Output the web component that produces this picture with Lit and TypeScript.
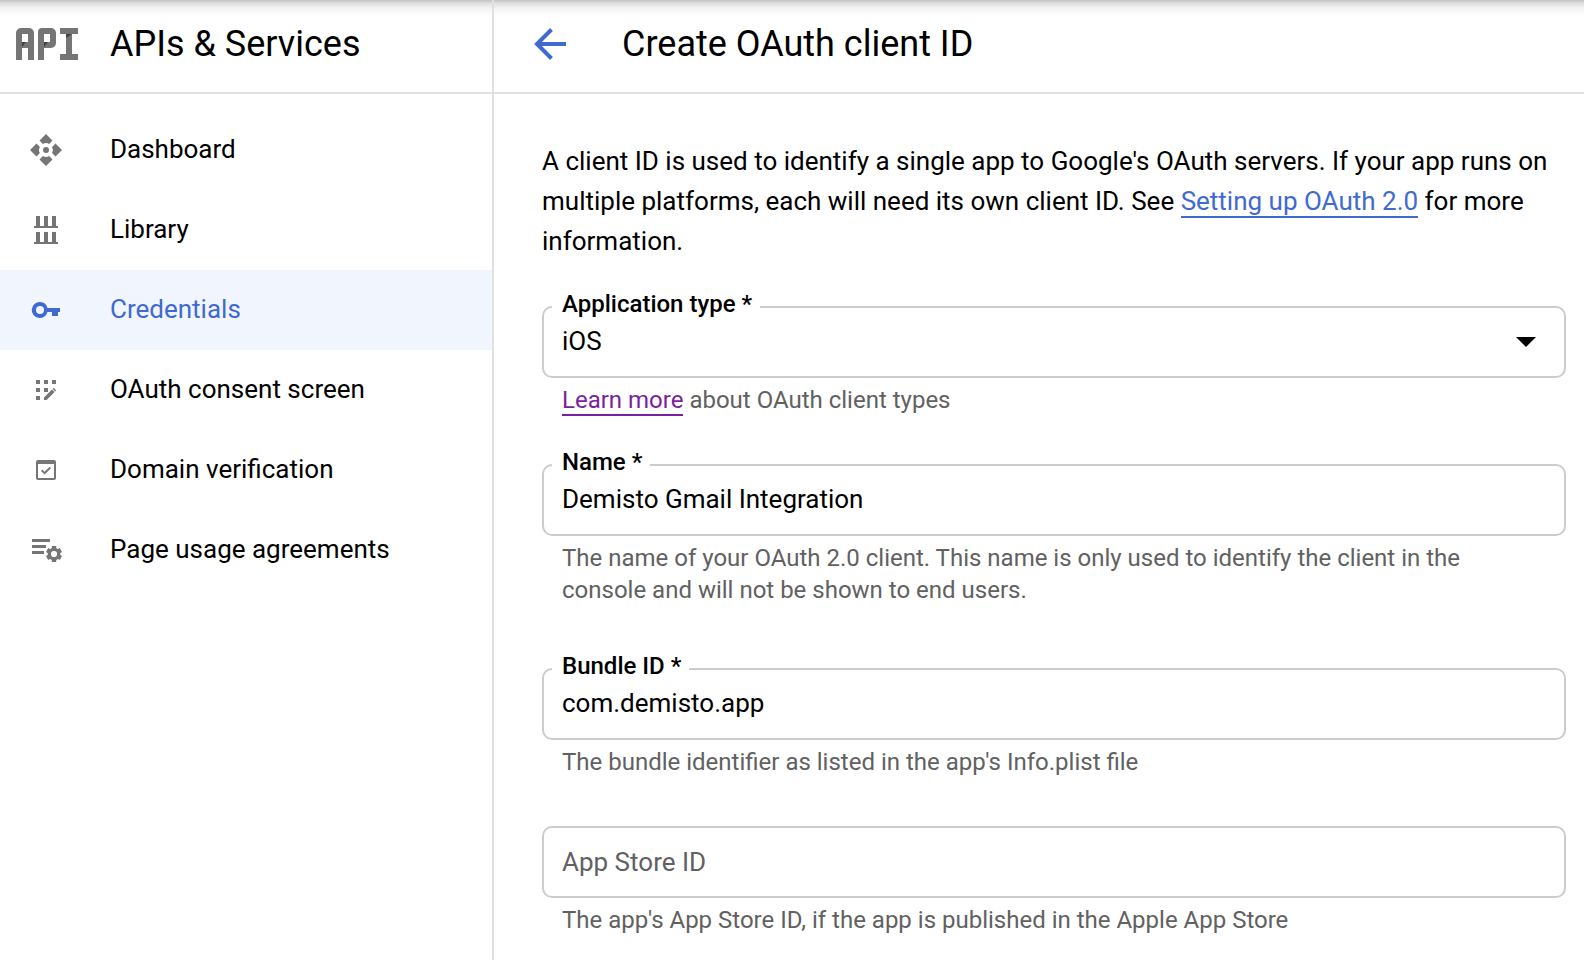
import { LitElement, html, css, svg, nothing, type TemplateResult } from "lit";
import { customElement, property } from "lit/decorators.js";

interface NavItem {
  label: string;
  icon: TemplateResult;
  active?: boolean;
}

const NAV: NavItem[] = [
  {
    label: "Dashboard",
    icon: svg`<path d="M16 0l6.500 6.500-3.400 3.400A6 6 0 0 0 12.900 9.900L9.500 6.500zM32 16l-6.500 6.500-3.400-3.400A6 6 0 0 0 22.100 12.900L25.500 9.500zM16 32l-6.500-6.500 3.400-3.400A6 6 0 0 0 19.100 22.100L22.500 25.500zM0 16l6.500-6.500 3.400 3.400A6 6 0 0 0 9.900 19.100L6.500 22.500z"/><circle cx="16" cy="16" r="3"/>`,
  },
  {
    label: "Library",
    icon: svg`<path d="M6 2h4v10h4V2h4v10h4V2h4v10h2v2H4v-2h2zM6 18h4v10h4V18h4v10h4V18h4v10h2v2H4v-2h2z"/>`,
  },
  {
    label: "Credentials",
    active: true,
    icon: svg`<path fill-rule="evenodd" d="M10 8a8 8 0 0 1 7.500 6H30v4h-2v4h-6v-4h-4.500A8 8 0 1 1 10 8zm0 4a4 4 0 1 0 0 8 4 4 0 0 0 0-8z"/>`,
  },
  {
    label: "OAuth consent screen",
    icon: svg`<path d="M6 6h4v4H6zM14 6h4v4h-4zM22 6h4v4h-4zM6 14h4v4H6zM14 14h4v4h-4zM6 22h4v4H6zM14 23.400V26h2.600l8-8-2.600-2.600zM26.200 16.400l-1 1-2.600-2.600 1-1z"/>`,
  },
  {
    label: "Domain verification",
    icon: svg`<path fill-rule="evenodd" d="M8 6h16a2 2 0 0 1 2 2v16a2 2 0 0 1-2 2H8a2 2 0 0 1-2-2V8a2 2 0 0 1 2-2zm0 4v14h16V10zm6.600 10.600l-3.600-3.600 1.400-1.400 2.200 2.200 5-5 1.400 1.400z"/>`,
  },
  {
    label: "Page usage agreements",
    icon: svg`<path d="M2 5h18v3H2zM2 11h14v3H2zM2 17h12v3H2z"/><g fill="none" stroke="#757575"><circle cx="24" cy="20" r="4.700" stroke-width="3.200"/><path stroke-width="4.400" d="M24 15v-3M24 25v3M28.300 17.500l2.600-1.500M28.300 22.500l2.600 1.500M19.700 17.500l-2.600-1.500M19.700 22.500l-2.600 1.500"/></g>`,
  },
];

@customElement("form-field")
class FormField extends LitElement {
  @property() label = "";
  @property() value = "";
  @property({ type: Boolean }) required = false;
  @property({ type: Boolean }) select = false;

  static styles = css`
    :host {
      display: block;
    }
    .box {
      position: relative;
      display: grid;
      align-items: center;
    }
    .control {
      grid-area: 1 / 1;
      box-sizing: border-box;
      width: 100%;
      height: 72px;
      margin: 0;
      padding: 0 18px;
      border: 2px solid #ccc;
      border-radius: 10px;
      outline: none;
      background: transparent;
      color: #000;
      font: inherit;
      font-size: 26px;
      appearance: none;
    }
    .control:focus-visible {
      border-color: #3367d6;
    }
    .filled {
      padding-bottom: 2px;
    }
    .control::placeholder {
      color: #616161;
      opacity: 1;
    }
    .label {
      position: absolute;
      top: -18px;
      left: 10px;
      padding: 0 8px 0 10px;
      background: #fff;
      font-size: 24px;
      font-weight: 500;
      line-height: 32px;
    }
    .arrow {
      grid-area: 1 / 1;
      justify-self: end;
      width: 20px;
      height: 10px;
      margin-right: 30px;
      pointer-events: none;
    }
    .hint {
      padding: 6px 20px 0;
      color: #616161;
      font-size: 24px;
      line-height: 32px;
    }
  `;

  render() {
    const name = this.required ? `${this.label} *` : this.label;
    return html`
      <div class="box">
        ${this.select
          ? html`<select id="control" class="control filled">
                <option>${this.value}</option>
              </select>
              <svg class="arrow" viewBox="0 0 20 10" aria-hidden="true">
                <path d="M0 0h20L10 10z" />
              </svg>`
          : html`<input
              id="control"
              class="control ${this.value ? "filled" : ""}"
              type="text"
              .value=${this.value}
              placeholder=${this.value ? nothing : name}
              aria-label=${this.value ? nothing : name}
            />`}
        ${this.value ? html`<label class="label" for="control">${name}</label>` : nothing}
      </div>
      <div class="hint"><slot></slot></div>
    `;
  }
}

@customElement("app-root")
class AppRoot extends LitElement {
  static styles = css`
    :host {
      display: block;
      font-family: Roboto, "Noto Sans", sans-serif;
      color: #000;
      background: #fff;
    }
    .layout {
      display: grid;
      grid-template-columns: 494px 1fr;
      min-height: 100vh;
      background: linear-gradient(#c2c2c2, #dedede 3px, #f2f2f2 8px, #fff 16px);
    }
    .side {
      border-right: 2px solid #e0e0e0;
    }
    .bar {
      display: flex;
      align-items: center;
      box-sizing: border-box;
      height: 94px;
      padding-bottom: 4px;
      border-bottom: 2px solid #e0e0e0;
    }
    .side .bar {
      gap: 32px;
      padding-left: 16px;
    }
    .main .bar {
      gap: 56px;
      padding-left: 40px;
    }
    .logo {
      width: 62px;
      height: 32px;
    }
    h1,
    h2 {
      margin: 0;
      font-size: 36px;
      font-weight: 400;
      line-height: 48px;
    }
    .back {
      display: flex;
      padding: 0;
      border: 0;
      background: none;
      cursor: pointer;
    }
    .nav {
      display: flex;
      flex-direction: column;
      padding-top: 16px;
    }
    .item {
      display: flex;
      align-items: center;
      gap: 48px;
      height: 80px;
      padding-left: 30px;
      color: #000;
      font-size: 26px;
      text-decoration: none;
    }
    .text {
      padding-bottom: 2px;
    }
    .item svg {
      width: 32px;
      height: 32px;
      fill: #757575;
    }
    .item.active {
      background: #f0f5fe;
      color: #3f6ad2;
    }
    .item.active svg {
      fill: #3f6ad2;
    }
    .content {
      padding: 47px 18px 0 48px;
    }
    .intro {
      margin: 0;
      font-size: 26px;
      line-height: 40px;
    }
    .form {
      display: flex;
      flex-direction: column;
      gap: 48px;
      padding-top: 45px;
    }
    .roomy {
      padding-bottom: 14px;
    }
    .link {
      border-bottom: 2px solid #3f6ad2;
      color: #3f6ad2;
      text-decoration: none;
    }
    .visited {
      border-color: #7b1fa2;
      color: #7b1fa2;
    }
  `;

  render() {
    return html`
      <div class="layout">
        <aside class="side">
          <div class="bar">
            <svg class="logo" viewBox="0 0 62 32" fill="#757575" aria-hidden="true">
              <path fill-rule="evenodd" d="M5 0h8a5 5 0 0 1 5 5v27h-6V20H6v12H0V5a5 5 0 0 1 5-5zM6 6v8h6V6z" />
              <path fill-rule="evenodd" d="M26 0h9a5 5 0 0 1 5 5v10a5 5 0 0 1-5 5h-7v12h-6V4a4 4 0 0 1 4-4zM28 6v8h6V6z" />
              <path d="M44 0h18v6h-6v20h6v6H44v-6h6V6h-6z" />
              <path fill="#424242" d="M6 14h4l-4 5zM28 14h4l-4 5zM50 6h6l-6 4z" />
            </svg>
            <h2>APIs &amp; Services</h2>
          </div>
          <nav class="nav">
            ${NAV.map(
              (item) => html`<a
                class="item ${item.active ? "active" : ""}"
                href="#"
                aria-current=${item.active ? "page" : nothing}
              >
                <svg viewBox="0 0 32 32" aria-hidden="true">${item.icon}</svg>
                <span class="text">${item.label}</span>
              </a>`,
            )}
          </nav>
        </aside>
        <main class="main">
          <div class="bar">
            <button class="back" aria-label="Back">
              <svg width="32" height="32" viewBox="0 0 32 32" fill="none" stroke="#3f6ad2" stroke-width="4" aria-hidden="true">
                <path d="M32 16H4M17.500 1.500L3 16l14.500 14.500" />
              </svg>
            </button>
            <h1>Create OAuth client ID</h1>
          </div>
          <div class="content">
            <p class="intro">
              A client ID is used to identify a single app to Google's OAuth servers. If your app
              runs on multiple platforms, each will need its own client ID. See
              <a class="link" href="#">Setting up OAuth 2.0</a> for more information.
            </p>
            <form class="form">
              <form-field label="Application type" value="iOS" required select>
                <a class="link visited" href="#">Learn more</a> about OAuth client types
              </form-field>
              <form-field class="roomy" label="Name" value="Demisto Gmail Integration" required>
                The name of your OAuth 2.0 client. This name is only used to identify the client in
                the console and will not be shown to end users.
              </form-field>
              <form-field label="Bundle ID" value="com.demisto.app" required>
                The bundle identifier as listed in the app's Info.plist file
              </form-field>
              <form-field label="App Store ID">
                The app's App Store ID, if the app is published in the Apple App Store
              </form-field>
            </form>
          </div>
        </main>
      </div>
    `;
  }
}
